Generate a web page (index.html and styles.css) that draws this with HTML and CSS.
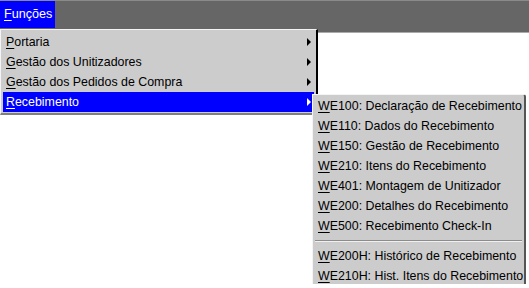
FILE: index.html
```html
<!DOCTYPE html>
<html lang="pt">
<head>
<meta charset="UTF-8">
<title>Funções</title>
<link rel="stylesheet" href="styles.css">
</head>
<body>
  <div class="menubar">
    <div class="menubar-item active"><u>F</u>unções</div>
  </div>
  <div class="content">
    <div class="menu main-menu">
      <div class="menu-item"><span><u>P</u>ortaria</span><i class="arrow"></i></div>
      <div class="menu-item"><span><u>G</u>estão dos Unitizadores</span><i class="arrow"></i></div>
      <div class="menu-item"><span><u>G</u>estão dos Pedidos de Compra</span><i class="arrow"></i></div>
      <div class="menu-item selected"><span><u>R</u>ecebimento</span><i class="arrow"></i>
        <div class="menu sub-menu">
          <div class="menu-item"><span><u>W</u>E100: Declaração de Recebimento</span></div>
          <div class="menu-item"><span><u>W</u>E110: Dados do Recebimento</span></div>
          <div class="menu-item"><span><u>W</u>E150: Gestão de Recebimento</span></div>
          <div class="menu-item"><span><u>W</u>E210: Itens do Recebimento</span></div>
          <div class="menu-item"><span><u>W</u>E401: Montagem de Unitizador</span></div>
          <div class="menu-item"><span><u>W</u>E200: Detalhes do Recebimento</span></div>
          <div class="menu-item"><span><u>W</u>E500: Recebimento Check-In</span></div>
          <div class="separator"></div>
          <div class="menu-item"><span><u>W</u>E200H: Histórico de Recebimento</span></div>
          <div class="menu-item"><span><u>W</u>E210H: Hist. Itens do Recebimento</span></div>
        </div>
      </div>
    </div>
  </div>
</body>
</html>
```
FILE: styles.css
```css
body {
  margin: 0;
  background: #fff;
  font-family: "Liberation Sans", Arial, sans-serif;
  font-size: 12.4px;
  color: #000;
}

.menubar {
  height: 31px;
  background: #666666;
  border-top: 1px solid #8a8a8a;
  border-bottom: 1px solid #aaaaaa;
  display: flex;
}

.menubar-item {
  height: 27px;
  padding: 0 3px 0 4px;
  line-height: 27px;
  font-size: 12.6px;
  color: #fff;
}

.menubar-item.active {
  background: #0000ff;
}

.content {
  height: 255px;
}

.menu {
  background: #cccccc;
  border-top: 1px solid #f4f4f4;
  border-left: 1px solid #f4f4f4;
  border-right: 2px solid #000;
  border-bottom: 2px solid #808080;
}

.main-menu {
  margin-top: -4px;
  width: 315px;
  padding: 2px 0 1px;
  position: relative;
}

.menu-item {
  position: relative;
  height: 20px;
  margin: 0 2px;
  padding: 0 0 0 3px;
  display: flex;
  justify-content: space-between;
  align-items: center;
  white-space: nowrap;
}

.menu-item.selected {
  background: #0000ff;
  color: #fff;
}

/* submenu sits over the page, to the right of the selected item */
.sub-menu {
  position: absolute;
  top: 2px;
  left: 309px;
  width: 211px;
  padding: 1px 0 0;
  border-radius: 0 3px 3px 0;
  border-right-color: #555;
  border-bottom-color: #666;
  color: #000;
}

.sub-menu .menu-item {
  margin: 0 1px;
  padding-left: 4px;
}

.arrow {
  width: 0;
  height: 0;
  margin-right: 3px;
  border-top: 4px solid transparent;
  border-bottom: 4px solid transparent;
  border-left: 4px solid #000;
}

.selected > .arrow {
  border-left-color: #fff;
}

.separator {
  height: 0;
  margin: 4px 2px;
  border-top: 1px solid #8c8c8c;
  border-bottom: 1px solid #f0f0f0;
}

u {
  text-underline-offset: 2px;
}
```
